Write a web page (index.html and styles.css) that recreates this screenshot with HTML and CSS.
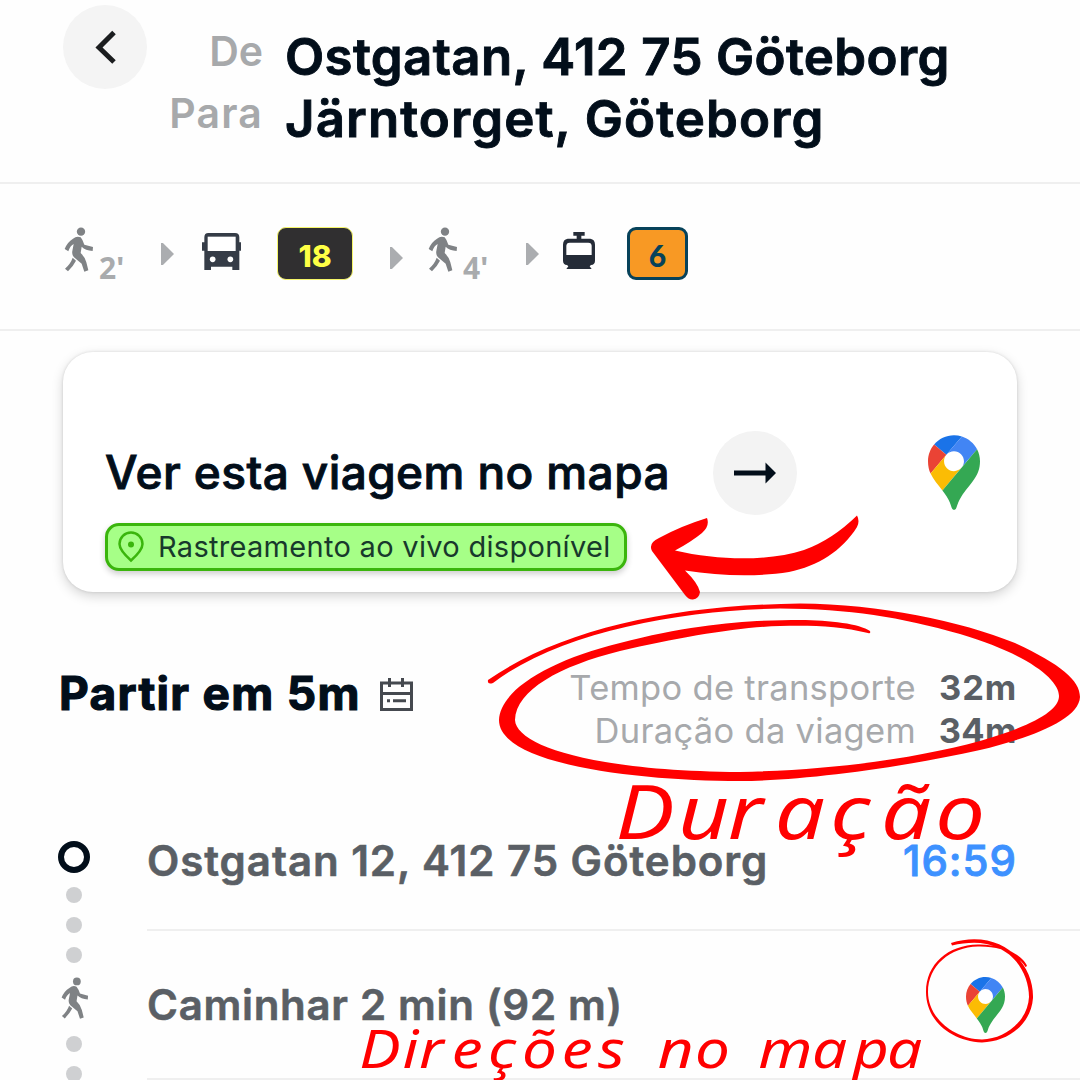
FILE: index.html
```html
<!DOCTYPE html>
<html lang="pt">
<head>
<meta charset="utf-8">
<title>Ostgatan – Järntorget</title>
<link rel="stylesheet" href="styles.css">
</head>
<body>
<svg width="0" height="0" class="defs">
  <symbol id="walk" viewBox="0 0 90 138">
    <circle cx="51" cy="14" r="12.5"/>
    <path d="M27 35Q38 26 50 31Q56 38 61 53L87 60L86 72Q64 70 53 59L50 78Q63 90 67 106L73 130L61 134L53 110L30 91Q23 83 25 72L29 51Q18 57 13 73L2 66Q10 45 27 35Z"/>
    <path d="M26 92L36 101Q28 117 12 133L3 125Q20 110 26 92Z"/>
  </symbol>
  <symbol id="pin" viewBox="0 0 92.4 132.4">
    <circle cx="46.2" cy="46.2" r="20" fill="#fff"/>
    <path fill="#1a73e8" d="M60.2 2.2C55.8.8 51 0 46.1 0 32 0 19.3 6.4 10.8 16.5l21.8 18.3L60.2 2.2z"/>
    <path fill="#ea4335" d="M10.8 16.5C4.1 24.5 0 34.9 0 46.1c0 8.7 1.7 15.7 4.6 22l28-33.3-21.8-18.3z"/>
    <path fill="#4285f4" d="M46.2 28.5c9.8 0 17.7 7.9 17.7 17.7 0 4.3-1.6 8.3-4.2 11.4 0 0 13.9-16.6 27.5-32.7-5.6-10.8-15.3-19-27-22.7L32.6 34.8c3.3-3.8 8.1-6.3 13.6-6.3"/>
    <path fill="#fbbc04" d="M46.2 63.8c-9.8 0-17.7-7.9-17.7-17.7 0-4.3 1.5-8.3 4.1-11.3l-28 33.3c4.8 10.6 12.8 19.2 21 29.9l34.1-40.5c-3.3 3.9-8.1 6.3-13.5 6.3"/>
    <path fill="#34a853" d="M59.1 109.2c15.4-24.1 33.3-35 33.3-63 0-7.7-1.9-14.9-5.2-21.3L25.6 98c2.6 3.4 5.3 7.3 7.9 11.3 9.4 14.5 6.8 23.1 12.8 23.1s3.4-8.7 12.8-23.2"/>
  </symbol>
</svg>

<header class="header">
  <button class="round back" aria-label="Voltar">
    <svg width="24" height="36" viewBox="0 0 24 36"><path d="M21 3.500L6 18.500L21 33" fill="none" stroke="#1b1d1f" stroke-width="5"/></svg>
  </button>
  <div class="labels"><span>De</span><span class="para">Para</span></div>
  <h1 class="route"><span>Ostgatan, 412 75 Göteborg</span><span class="dest">Järntorget, Göteborg</span></h1>
</header>

<div class="strip">
  <div class="walk-step"><svg class="walk" width="30" height="46"><use href="#walk"/></svg><span class="mins">2'</span></div>
  <i class="tri tri-a"></i>
  <svg class="bus" width="39" height="37" viewBox="0 0 117 111" fill="#353c47">
    <path d="M19 0H99Q112 0 112 13V28H117V53H112V111H91V101H27V111H7V53H0V28H7V13Q7 0 19 0Z"/>
    <rect x="17" y="11" width="84" height="43" fill="#fff"/><circle cx="32" cy="79" r="8.500" fill="#fff"/><circle cx="85" cy="79" r="8.500" fill="#fff"/>
  </svg>
  <span class="line line-bus">18</span>
  <i class="tri tri-b"></i>
  <div class="walk-step second"><svg class="walk" width="30" height="46"><use href="#walk"/></svg><span class="mins">4'</span></div>
  <i class="tri tri-c"></i>
  <svg class="tram" width="32" height="37" viewBox="0 0 96 111" fill="#252c38">
    <path d="M31 0H65V11H55V20H82Q96 22 96 38V86Q96 98 84 99L80 103L86 111H10L16 103L12 99Q0 98 0 86V38Q0 22 14 20H41V11H31Z"/>
    <path d="M10 69V42Q10 32 20 32H76Q86 32 86 42V69Z" fill="#fff"/>
  </svg>
  <span class="line line-tram">6</span>
</div>

<section class="card">
  <div class="card-main">
    <h2 class="card-title">Ver esta viagem no mapa</h2>
    <div class="live">
      <svg width="26" height="32" viewBox="0 0 26 32"><path d="M13 29.500C8 25 1.500 19 1.500 13A11.500 11.500 0 0 1 24.500 13C24.500 19 18 25 13 29.500Z" fill="none" stroke="#3ab50c" stroke-width="2.500"/><circle cx="13" cy="13.500" r="3" fill="#3ab50c"/></svg>
      <span class="live-text">Rastreamento ao vivo disponível</span>
    </div>
  </div>
  <div class="round go"><svg width="42" height="22" viewBox="0 0 42 22"><path d="M0 8.500H31.500V0.500L42 11L31.500 21.500V13.500H0Z" fill="#020e1a"/></svg></div>
  <svg class="card-pin" width="52" height="75"><use href="#pin"/></svg>
</section>

<section class="summary">
  <h2 class="depart">Partir em 5m</h2>
  <svg class="cal" width="33" height="33" viewBox="0 0 33 33" fill="none" stroke="#45494f" stroke-width="3"><path d="M1.500 5H31.500V31.500H1.500ZM1.500 15.500H31.500M9.500 0V9M22.500 0V9M7 22.800H10M13 22.800H26"/></svg>
  <dl class="times">
    <dt>Tempo de transporte</dt><dd>32m</dd>
    <dt>Duração da viagem</dt><dd class="d34">34m</dd>
  </dl>
</section>

<section class="steps">
  <div class="rail"><i class="ring"></i><i class="dot"></i><i class="dot"></i><i class="dot"></i><svg class="walk rail-walk" width="28" height="43"><use href="#walk"/></svg><i class="dot"></i><i class="dot"></i></div>
  <div class="rows">
    <div class="row"><span class="place">Ostgatan 12, 412 75 Göteborg</span><span class="clock">16:59</span></div>
    <div class="row walk-row"><span class="place foot">Caminhar 2 min (92 m)</span><svg class="row-pin" width="39" height="56"><use href="#pin"/></svg></div>
  </div>
</section>

<svg class="notes" width="1080" height="1080" viewBox="0 0 1080 1080" fill="#f00">
  <path d="M707 518Q710 526 702 533Q691 542 675 550.500C720 561 770 561 804 550Q832 540 857 515.500Q860 521 857 527C842 551 818 566 789 572C757 577 720 576 685 570.500Q698 583 700 592Q699 599 693 599.500Q689 600 685 595L652 551Q648 543 659 538Q681 526 707 518Z"/>
  <path d="M488 680C560 630 670 605 800 603.500C880 604 960 621 1015 643C1060 664 1080 680 1080 697C1079 720 1030 738 980 750C900 768 800 781 740 781C640 781 499 765 499 720C500 690 550 660 620 643C700 622 760 620 800 620C830 620 860 624 870 631Q871 634 868 633C840 626 810 625 780 626C740 627 680 637 620 651C560 666 516 690 515 720C516 745 590 771 740 772C840 770 920 757 980 741C1035 725 1059 710 1059 696C1059 680 1030 655 960 634C900 617 850 609 780 608.500C680 610 560 632 493 683Q487 685 488 680Z"/>
  <path d="M951 943C1000 928 1034 962 1033 998C1031 1025 1007 1042 982 1042.500C950 1041 926 1020 926 992C926 964 948 945 978 944.500C1005 944 1024 957 1027 966L1025.500 967C1016 952 998 946 978 946.500C950 947 928 966 928 992C928 1018 954 1039 982 1039.500C1006 1039 1028 1020 1029 997C1029 978 1018 956 998 948C984 941 968 942 952 945.500Z"/>
  <g class="hand" transform="translate(612 839) scale(1.180 1)"><text class="big" x="3 56 98 138 185 228 274" y="0">Duração</text></g>
  <g class="hand" transform="translate(357 1068) scale(1.170 1)"><text class="small" x="2 39 53 81 112 141 175 206 235 257 289 325 343 389 424 453" y="0">Direções no mapa</text></g>
</svg>
</body>
</html>
```
FILE: styles.css
```css
* { box-sizing: border-box; margin: 0; padding: 0; }
body {
  width: 1080px; height: 1080px; overflow: hidden; position: relative;
  background: #fefefe; font-family: Inter, "Liberation Sans", sans-serif; white-space: nowrap;
}
svg { display: block; flex: none; }
.defs { position: absolute; }
.round { width: 84px; height: 84px; border: 0; border-radius: 50%; background: #f3f3f3; display: flex; align-items: center; justify-content: center; flex: none; }

.header { height: 184px; border-bottom: 2px solid #efefef; display: flex; align-items: flex-start; padding-left: 63px; }
.back { margin-top: 5px; background: #f4f4f4; }
.labels { width: 116px; margin-top: 20px; display: flex; flex-direction: column; align-items: flex-end; font-size: 41px; font-weight: 600; line-height: 62px; color: #a7a9ab; }
.para { letter-spacing: 1.2px; }
.route { margin: 26px 0 0 22px; display: flex; flex-direction: column; font-size: 51px; font-weight: 600; line-height: 62px; letter-spacing: .35px; color: #020e1a; -webkit-text-stroke: .9px #020e1a; }
.dest { letter-spacing: 1.1px; }

.strip { height: 147px; border-bottom: 2px solid #efefef; display: flex; align-items: flex-start; padding: 43px 0 0 64px; }
.walk { fill: #7f8285; }
.walk-step { display: flex; width: 61px; gap: 5px; }
.second { margin-left: 25px; }
.mins { margin-top: 24px; font: 700 30px/34px "Noto Sans", sans-serif; color: #a9abad; }
.tri { width: 13px; height: 22px; background: #abadb0; clip-path: polygon(0 0, 15% 0, 100% 50%, 15% 100%, 0 100%); flex: none; }
.tri-a { margin: 16px 0 0 36px; }
.tri-b { margin: 20px 0 0 37px; }
.tri-c { margin: 16px 0 0 37px; }
.bus { margin: 6px 0 0 28px; }
.tram { margin: 5px 0 0 24px; }
.line { height: 53px; display: flex; align-items: center; justify-content: center; }
.line-bus { width: 76px; margin-left: 36px; border: 1.5px solid #f5f56a; border-radius: 9px; background: #302f30; color: #ffff45; font-size: 30px; font-weight: 800; padding-top: 4px; }
.line-tram { width: 61px; margin-left: 32px; border: 3px solid #07425a; border-radius: 9px; background: #f89924; color: #07425a; font: 900 30px/1 Lato, sans-serif; padding-top: 2px; }

.card { height: 240px; margin: 21px 63px 0; border-radius: 30px; background: #fff; display: flex; align-items: flex-start; padding-left: 42px; box-shadow: 0 0 3px rgba(0,0,0,.12), 0 4px 12px rgba(0,0,0,.17); }
.card-main { width: 608px; padding-top: 92px; }
.card-title { font-size: 46px; line-height: 56px; font-weight: 500; letter-spacing: .4px; color: #020e1a; -webkit-text-stroke: .9px #020e1a; }
.live { width: 522px; height: 48px; margin-top: 23px; border: 3px solid #3ab50c; border-radius: 14px; background: #a6ff87; display: flex; align-items: center; gap: 14px; padding-left: 10px; font-size: 29px; letter-spacing: .3px; color: #18392c; box-shadow: 0 3px 6px rgba(0,0,0,.2); }
.live-text { padding-bottom: 2px; }
.go { margin-top: 79px; }
.card-pin { margin: 83px 0 0 131px; }

.summary { height: 86px; margin: 73px 63px 0 59px; display: flex; align-items: flex-start; }
.depart { font-size: 46px; line-height: 56px; font-weight: 700; letter-spacing: 1.3px; color: #020e1a; width: 321px; -webkit-text-stroke: 1.2px #020e1a; }
.cal { margin: 13px 0 0; }
.times { margin-left: auto; display: grid; grid-template-columns: auto 101px; padding-top: 1px; font-size: 34.500px; line-height: 43px; text-align: right; color: #a7a9ac; }
.times dt { letter-spacing: .3px; }
.times dd { font-weight: 700; color: #5a5f65; letter-spacing: .8px; }
.times .d34 { letter-spacing: .4px; }

.steps { margin-top: 84px; display: flex; padding-left: 58px; }
.rail { width: 32px; height: 245px; padding-top: 6px; display: flex; flex-direction: column; align-items: center; gap: 14px; overflow: hidden; }
.rail > * { flex: none; }
.rail-walk { margin-bottom: 2px; margin-left: 2px; }
.ring { width: 32px; height: 32px; border: 6px solid #020e1a; border-radius: 50%; background: #fff; }
.dot { width: 16px; height: 16px; border-radius: 50%; background: #cfd0d2; }
.rows { flex: 1; margin-left: 57px; }
.row { height: 96px; border-bottom: 2px solid #efefef; display: flex; align-items: flex-start; justify-content: space-between; padding: 1px 63px 0 0; font-size: 42px; line-height: 50px; color: #5a5f65; }
.place { font-weight: 600; letter-spacing: .95px; -webkit-text-stroke: .6px #5a5f65; }
.clock { font-weight: 500; color: #3d91ff; letter-spacing: 1px; -webkit-text-stroke: .9px #3d91ff; }
.walk-row { height: 149px; padding: 49px 75px 0 0; }
.foot { letter-spacing: .7px; }
.row-pin { margin-top: -3px; }

.notes { position: absolute; left: 0; top: 0; pointer-events: none; }
.hand { font-family: "Noto Sans", sans-serif; font-style: italic; font-weight: 400; }
.big { font-size: 75px; }
.small { font-size: 53px; }
```
